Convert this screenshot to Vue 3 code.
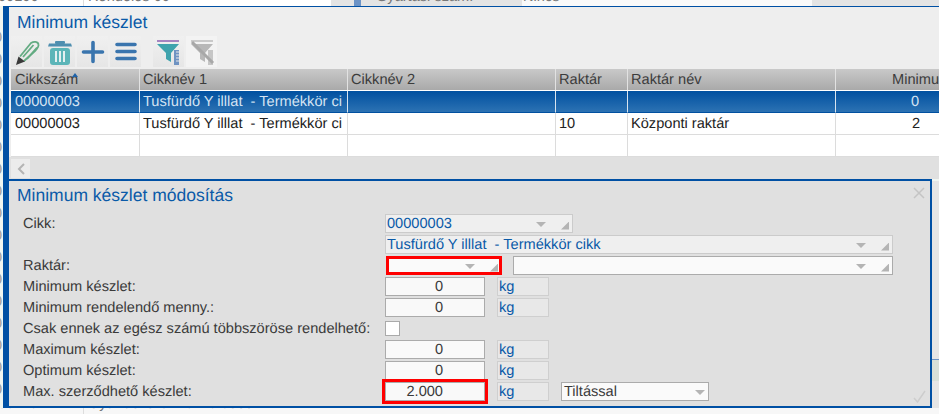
<script setup>
const columns = [
  { label: 'Cikkszám', sort: true },
  { label: 'Cikknév 1' },
  { label: 'Cikknév 2' },
  { label: 'Raktár' },
  { label: 'Raktár név' },
  { label: 'Minimum készlet', num: true }
]
const name = 'Tusfürdő Y illlat  - Termékkör cikk'
const rows = [
  { selected: true, cells: ['00000003', name, '', '', '', '0'] },
  { cells: ['00000003', name, '', '10', 'Központi raktár', '2'] },
  { cells: ['', '', '', '', '', ''] }
]
const ghostRows = [30, 52, 74, 96, 118, 140, 162, 184, 206, 228, 250, 272, 294, 316, 338, 360, 382]
const amounts = [
  { label: 'Maximum készlet:', value: '0' },
  { label: 'Optimum készlet:', value: '0' }
]
</script>

<template>
  <div class="desktop">
    <div class="ghost">
      <div class="ghost-top">
        <i class="gline"></i>
        <span class="g1">00100</span><span class="g2">Rendelés 00</span>
        <i class="gbar"></i><span class="g3">Gyártási szám:</span><span class="g4">Nincs</span>
      </div>
      <span v-for="y in ghostRows" :key="y" class="ghost-zero" :style="{ top: y + 'px' }">0</span>
      <div class="ghost-bottom">
        <i class="gline"></i>
        <span class="g1">00110</span><span class="g2">Gyártási szám 0110f05352</span>
      </div>
      <div class="ghost-right"><i></i></div>
    </div>

    <div class="frame">
      <section class="list">
        <h1 class="title">Minimum készlet</h1>
        <div class="toolbar">
          <button class="tool">
            <svg width="26" height="26" viewBox="0 0 26 26" fill="none">
              <path d="M6 17.500 17 4C20 2 24 2.500 24.500 5.500 25 8 23 10 21 12L10 22" stroke="#63ab82" stroke-width="1.800" stroke-linejoin="round"/>
              <path d="M9 18 19.500 6M13 20 23 8.500" stroke="#63ab82" stroke-width="1.800"/>
              <path d="M2 26 4.500 17.500 11 22.500Z" fill="#3a3a3a"/>
            </svg>
          </button>
          <button class="tool">
            <svg width="26" height="26" viewBox="0 0 26 26" fill="none">
              <path d="M1 7.500 2 4.500H24L25 7.500Z" fill="#4f8fb0"/>
              <rect x="8" y="2" width="10" height="3" rx="1" fill="#4f8fb0"/>
              <rect x="3" y="9" width="20" height="17" rx="3" fill="#5cb5b8"/>
              <path d="M9 12V23M13 12V23M17 12V23" stroke="#e4f0f0" stroke-width="2"/>
            </svg>
          </button>
          <button class="tool">
            <svg width="24" height="24" viewBox="0 0 24 24">
              <path d="M12 2.500V21.500M2.500 12H21.500" stroke="#3a75ae" stroke-width="3.600" stroke-linecap="round"/>
            </svg>
          </button>
          <button class="tool">
            <svg width="24" height="24" viewBox="0 0 24 24">
              <path d="M3 4.500H21M3 11.500H21M3 18.500H21" stroke="#3a75ae" stroke-width="3.600" stroke-linecap="round"/>
            </svg>
          </button>
          <button class="tool sep">
            <svg width="26" height="26" viewBox="0 0 26 26">
              <path d="M1 2H23" stroke="#8c5fb0" stroke-width="1.500"/>
              <path d="M1 5H23L15 14V23L10 20V14Z" fill="#3fa3ad"/>
              <rect x="18" y="11" width="5" height="15" fill="#6f93c2"/>
              <path d="M20 13H23M20 16H23M20 19H23M20 22H23" stroke="#e8e8e8" stroke-width="1"/>
            </svg>
          </button>
          <button class="tool off">
            <svg width="26" height="26" viewBox="0 0 26 26">
              <path d="M2 2H24" stroke="#bcbcbc" stroke-width="1.500"/>
              <path d="M2 5H24L16 14V23L11 20V14Z" fill="#b8b8b8"/>
              <rect x="19" y="11" width="5" height="15" fill="#c6c6c6"/>
              <path d="M3 3 24 24" stroke="#a8a8a8" stroke-width="3"/>
            </svg>
          </button>
        </div>

        <div class="table">
          <div class="tr head">
            <div v-for="c in columns" :key="c.label" class="th" :class="{ numhead: c.num }">
              {{ c.label }}<i v-if="c.sort" class="sort"></i>
            </div>
          </div>
          <div v-for="(r, i) in rows" :key="i" class="tr body" :class="{ selected: r.selected }">
            <div v-for="(cell, j) in r.cells" :key="j" class="td" :class="{ num: j === 5 }"><span class="clip">{{ cell }}</span></div>
          </div>
        </div>

        <div class="scrollbar">
          <button class="scroll-btn">
            <svg width="8" height="12" viewBox="0 0 8 12" fill="none">
              <path d="M7 1 2 6 7 11" stroke="#b4b4b4" stroke-width="2"/>
            </svg>
          </button>
        </div>
      </section>

      <section class="dialog">
        <h2 class="title dialog-title">Minimum készlet módosítás</h2>
        <svg class="close" width="12" height="12" viewBox="0 0 12 12">
          <path d="M1 1 11 11M11 1 1 11" stroke="#c4c4c4" stroke-width="1.500"/>
        </svg>

        <div class="form">
          <div class="row">
            <label>Cikk:</label>
            <div class="field locked blue w188"><span>00000003</span><i class="caret"></i><i class="corner"></i></div>
          </div>
          <div class="row">
            <label></label>
            <div class="field locked blue w508"><span>{{ name }}</span><i class="caret"></i><i class="corner"></i></div>
          </div>
          <div class="row">
            <label>Raktár:</label>
            <div class="field invalid w116"><span></span><i class="caret"></i><i class="corner"></i></div>
            <div class="field w380 gap-raktar"><span></span><i class="caret"></i><i class="corner"></i></div>
          </div>
          <div class="row">
            <label>Minimum készlet:</label>
            <div class="field amount">0</div><div class="unit">kg</div>
          </div>
          <div class="row">
            <label>Minimum rendelendő menny.:</label>
            <div class="field amount">0</div><div class="unit">kg</div>
          </div>
          <div class="row">
            <label>Csak ennek az egész számú többszöröse rendelhető:</label>
            <div class="checkbox"></div>
          </div>
          <div v-for="a in amounts" :key="a.label" class="row">
            <label>{{ a.label }}</label>
            <div class="field amount">{{ a.value }}</div><div class="unit">kg</div>
          </div>
          <div class="row">
            <label>Max. szerződhető készlet:</label>
            <div class="field amount invalid-amount">2.000</div><div class="unit">kg</div>
            <div class="field w148"><span class="dark">Tiltással</span><i class="caret"></i></div>
          </div>
        </div>

        <svg class="confirm" width="13" height="13" viewBox="0 0 13 13" fill="none">
          <path d="M1 8 4.500 12 12 1" stroke="#cdcdcd" stroke-width="1.500"/>
        </svg>
      </section>
    </div>
  </div>
</template>

<style scoped>
.desktop {
  position: relative;
  width: 939px;
  height: 414px;
  overflow: hidden;
  background: #f1f6f1;
  font-family: "Liberation Sans", Arial, sans-serif;
  font-size: 14.6px;
  text-rendering: geometricPrecision;
  color: #333;
}
.ghost { position: absolute; inset: 0; color: #777; }
.ghost-top {
  position: absolute; left: 0; top: 0; width: 939px; height: 6px;
  background: linear-gradient(to right, #fff 0, #fff 331px, #e4e4e4 331px, #e4e4e4 522px, #fafafa 522px, #fafafa 812px, #e4e4e4 812px);
  overflow: hidden;
}
.ghost-top span, .ghost-bottom span { position: absolute; white-space: nowrap; }
.ghost-top span { top: -11px; }
.gline { position: absolute; left: 83px; top: 0; width: 1px; height: 6px; background: #ddd; }
.g1 { left: -2px; }
.g2 { left: 88px; }
.g3 { left: 376px; }
.g4 { left: 523px; }
.gbar { position: absolute; left: 354px; top: 0; width: 7px; height: 6px; background: #6c93c6; }
.ghost-zero { position: absolute; left: -6px; color: #999; }
.ghost-bottom { position: absolute; left: 0; top: 408px; width: 939px; height: 6px; overflow: hidden; background: #f7f7f7; }
.ghost-bottom span { top: -12px; }
.ghost-right { position: absolute; left: 932px; top: 181px; width: 7px; height: 227px; background: #e5e5e5; }
.ghost-right i { display: block; margin-top: 178px; height: 21px; border-top: 1px solid #6c93c6; background: #d8e0d8; }

.frame {
  position: absolute;
  left: 3px;
  top: 6px;
  width: 936px;
  height: 402px;
  border-left: 6px solid #0050a4;
  display: flex;
  flex-direction: column;
  overflow: hidden;
}
.list {
  height: 173px;
  box-sizing: border-box;
  flex: none;
  border-top: 1px solid #0050a4;
  background: #eeeeee;
  display: flex;
  flex-direction: column;
}
.title {
  margin: 0;
  font-size: 17.500px;
  font-weight: 400;
  color: #0a5aa8;
  line-height: 20px;
}
.list > .title { padding: 4px 0 0 8px; height: 24px; box-sizing: border-box; margin-top: 1px; }
.toolbar { display: flex; gap: 2px; padding: 4px 0 0 2px; height: 37px; box-sizing: border-box; }
.tool {
  width: 31px;
  height: 31px;
  padding: 0;
  border: 0;
  background: linear-gradient(#f0f0f0, #e6e6e6);
  display: flex;
  align-items: center;
  justify-content: center;
}
.tool.sep { margin-left: 10px; }
.tool.off { background: #f3f3f3; }

.table { margin-left: 2px; background: #fff; }
.tr { display: grid; grid-template-columns: 129px 208px 208px 72px 208px 170px; white-space: pre; }
.head { height: 21px; background: linear-gradient(#c9c9c9, #a9a9a9); margin-bottom: 1px; color: #3c3c3c; }
.th { position: relative; padding: 2px 0 0 3px; border-right: 1px solid #e2e2e2; line-height: 19px; overflow: hidden; }
.th:first-child { padding-left: 4px; }
.numhead { padding-left: 56px; border-right: 0; }
.sort {
  position: absolute; left: 61px; top: 4px;
  border: 3px solid transparent; border-top: 0;
  border-bottom: 4px solid #1f62a8;
}
.body { height: 22px; background: #fff; color: #222; }
.td { padding: 2px 5px 0 3px; border-right: 1px solid #dcdcdc; border-bottom: 1px solid #dcdcdc; line-height: 19px; overflow: hidden; }
.clip { display: block; overflow: hidden; }
.td:first-child { padding-left: 4px; }
.td:last-child { border-right: 0; }
.num { padding-left: 0; padding-right: 86px; text-align: right; }
.selected .td {
  background: linear-gradient(#0050a0, #2c72b3);
  color: #d4e3f2;
  border-right: 1px solid #d8e4ef;
  border-bottom: 1px solid #0050a0;
}
.scrollbar { flex: 1; background: #e0e0e0; padding: 2px 0 0 2px; }
.scroll-btn {
  width: 19px; height: 19px; padding: 0; border: 0;
  background: #ececec;
  display: flex; align-items: center; justify-content: center;
}

.dialog {
  position: relative;
  flex: 1;
  width: 923px;
  box-sizing: border-box;
  background: #e0e0e0;
  border-top: 2px solid #0050a4;
  border-right: 2px solid #0050a4;
  border-bottom: 2px solid #0050a4;
}
.dialog-title { padding: 4px 0 0 8px; height: 33px; box-sizing: border-box; }
.close { position: absolute; left: 904px; top: 6px; }
.confirm { position: absolute; left: 904px; top: 209px; }
.form { display: flex; flex-direction: column; padding-left: 14px; }
.row { display: flex; align-items: flex-start; height: 21px; }
.row label { width: 362px; flex: none; line-height: 21px; white-space: nowrap; color: #3a3a3a; }
.field {
  height: 19px;
  box-sizing: border-box;
  border: 1px solid #ababab;
  background: #fafafa;
  display: flex;
  align-items: center;
  line-height: 17px;
  padding: 1px 3px 0 1px;
  flex: none;
}
.field > span { flex: 1; white-space: pre; overflow: hidden; }
.locked { background: #efefef; border-color: #cbcbcb; }
.blue { color: #0a5aa8; }
.dark { color: #3a3a3a; padding-left: 1px; }
.w188 { width: 188px; }
.w508 { width: 508px; }
.w116 { width: 116px; margin-left: 1px; }
.w380 { width: 380px; }
.gap-raktar { margin-left: 11px; }
.w148 { width: 148px; margin-left: 12px; }
.invalid { outline: 3px solid #f00; outline-offset: -3px; }
.amount { width: 100px; padding: 1px 41px 0 0; justify-content: flex-end; background: #f9f9f9; color: #3a3a3a; }
.invalid-amount { outline: 3px solid #f00; outline-offset: 0; }
.unit {
  width: 52px; height: 19px; box-sizing: border-box; margin-left: 12px;
  border: 1px solid #cfcfcf; background: #e8e8e8; color: #0a5aa8;
  line-height: 18px; padding-left: 1px; flex: none;
}
.checkbox { width: 15px; height: 15px; box-sizing: border-box; margin-top: 2px; border: 1px solid #aaa; background: #fff; }
.caret {
  flex: none;
  border-left: 5px solid transparent;
  border-right: 5px solid transparent;
  border-top: 5px solid #b4b4b4;
}
.corner {
  flex: none;
  width: 8px;
  height: 8px;
  margin: 3px 0 0 15px;
  background: #b4b4b4;
  clip-path: polygon(100% 0, 100% 100%, 0 100%);
}
</style>
